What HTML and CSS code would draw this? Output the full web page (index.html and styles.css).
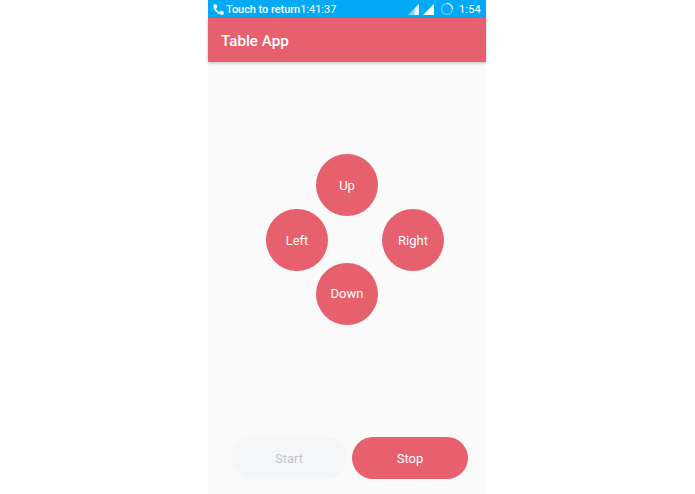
FILE: index.html
```html
<!DOCTYPE html>
<html lang="en">
<head>
<meta charset="utf-8">
<title>Table App</title>
<link rel="stylesheet" href="styles.css">
</head>
<body>
<div class="phone">
  <div class="status">
    <svg class="call" viewBox="0 0 24 24" width="13" height="13"><path fill="#fff" d="M6.600 10.800c1.400 2.800 3.800 5.100 6.600 6.600l2.200-2.200c.3-.3.7-.4 1-.2 1.100.4 2.300.6 3.600.6.600 0 1 .4 1 1V20c0 .6-.4 1-1 1C10.600 21 3 13.400 3 4c0-.6.4-1 1-1h3.500c.6 0 1 .4 1 1 0 1.300.2 2.500.6 3.600.1.300 0 .7-.2 1z" stroke="#fff" stroke-width="1"/></svg>
    <span class="touch">Touch to return</span><span class="timer">1:41:37</span>
    <span class="status-right">
      <svg class="sig" viewBox="0 0 11 11" width="11" height="11"><path fill="#fff" fill-opacity=".5" d="M0 11 11 0v11z"/><path fill="#fff" fill-opacity=".8" d="M6.500 4.500 11 0v11H6.500z"/></svg>
      <svg class="sig" viewBox="0 0 11 11" width="11" height="11"><path fill="#fff" d="M0 11 11 0v11z"/></svg>
      <svg class="spin" viewBox="0 0 14 14" width="14" height="14"><circle cx="7" cy="7" r="5.500" fill="none" stroke="#fff" stroke-opacity=".4" stroke-width="1.300"/><path d="M7 1.500A5.500 5.500 0 0 1 12.500 7" fill="none" stroke="#fff" stroke-opacity=".75" stroke-width="1.300"/></svg>
      <span class="clock">1:54</span>
    </span>
  </div>
  <header class="appbar">Table App</header>
  <main class="content">
    <div class="pad">
      <button class="round up">Up</button>
      <div class="pad-row">
        <button class="round">Left</button>
        <button class="round">Right</button>
      </div>
      <button class="round down">Down</button>
    </div>
    <div class="actions">
      <button class="pill off">Start</button>
      <button class="pill">Stop</button>
    </div>
  </main>
</div>
</body>
</html>
```
FILE: styles.css
```css
* { box-sizing: border-box; }
html, body { margin: 0; height: 100%; background: #fff; }
body { display: flex; justify-content: center; font-family: Roboto, "Liberation Sans", sans-serif; overflow: hidden; }
.phone { width: 278px; height: 494px; margin-right: 1px; display: flex; flex-direction: column; background: #fafafa; }
.status { height: 18px; flex: none; background: #03a9f4; color: #fff; display: flex; align-items: center; padding: 0 5px 0 4px; font-size: 11px; font-weight: 500; }
.call { margin-right: 1px; }
.touch { letter-spacing: -.05px; }
.timer { font-weight: 400; }
.status-right { margin-left: auto; display: flex; align-items: center; }
.sig { margin-right: 4px; }
.spin { margin: 0 5px 0 2px; }
.clock { font-weight: 400; letter-spacing: .2px; }
.appbar { height: 44px; flex: none; background: #e6606e; color: #fff; font-size: 15.200px; font-weight: 500; display: flex; align-items: center; padding: 2px 0 0 13px; box-shadow: 0 1px 3px rgba(0,0,0,.25); position: relative; }
.content { flex: 1; display: flex; flex-direction: column; padding-top: 92px; }
.pad { width: 178px; margin-left: 58px; display: flex; flex-direction: column; }
.pad-row { display: flex; justify-content: space-between; margin: -7px 0 -8px; }
.round { width: 62px; height: 62px; border: 0; padding: 0; border-radius: 50%; background: #e6606e; color: #fff; font: 400 13px Roboto, sans-serif; }
.up, .down { margin-left: 50px; }
.down { padding-bottom: 2px; }
.actions { margin-top: auto; display: flex; gap: 5px; padding: 0 0 15px 23px; }
.pill { width: 116px; height: 42px; border: 0; padding: 0; border-radius: 21px; background: #e6606e; color: #fff; font: 400 13px Roboto, sans-serif; }
.off { background: #f5f6f8; color: #c4c6ca; }
```
